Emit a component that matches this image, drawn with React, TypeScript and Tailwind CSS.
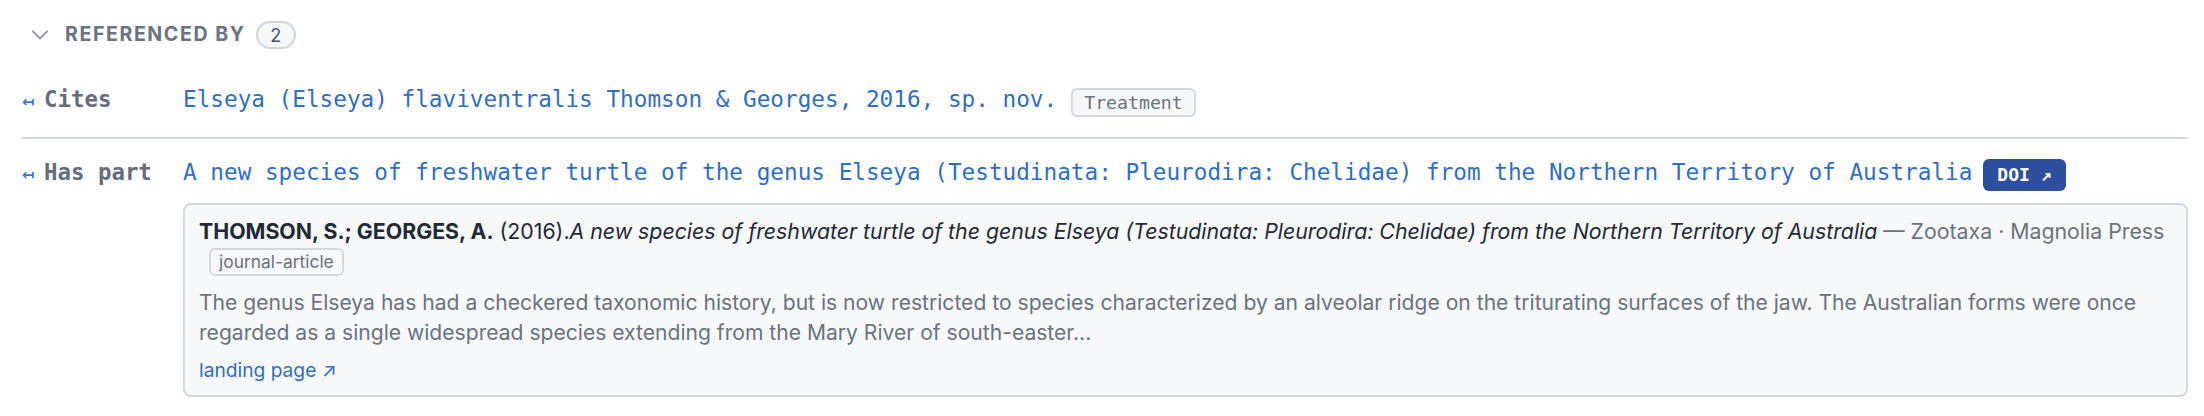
import { ChevronDown } from "lucide-react";

const mono = "font-['DejaVu_Sans_Mono',monospace]";

function RelLabel({ label }: { label: string }) {
  return (
    <div className="w-[161px] shrink-0 flex items-baseline">
      <span className="text-[#3b78c9] text-[15px] font-['DejaVu_Sans',sans-serif] font-bold w-[22px]">↤</span>
      <span className={`${mono} font-bold text-[22.4px] text-[#656c7b]`}>{label}</span>
    </div>
  );
}

export default function App() {
  return (
    <div className="min-h-[416px] bg-white pt-[21px] pl-[22px] pr-[16px] font-['Inter',sans-serif]">
      {/* header */}
      <div className="flex items-center h-[28px] pl-[4px]">
        <ChevronDown size={28} strokeWidth={2} className="text-[#9ca3af]" />
        <span className="ml-[11px] text-[19.6px] font-bold tracking-[0.08em] text-[#6b7280]">REFERENCED BY</span>
        <span className="ml-[10px] h-[28px] w-[40px] flex items-center justify-center rounded-full border-2 border-[#d1d5db] bg-[#f6f7f9] text-[18px] text-[#4b5563]">
          2
        </span>
      </div>

      {/* cites */}
      <div className="flex items-baseline pt-[33px] pb-[20px] border-b-2 border-[#d5d8de]">
        <RelLabel label="Cites" />
        <div className={`${mono} text-[22.7px] leading-[34px]`}>
          <span className="text-[#2f6fc2]">Elseya (Elseya) flaviventralis Thomson &amp; Georges, 2016, sp. nov.</span>
          <span className="ml-[14px] inline-block align-[-2px] rounded-[6px] border-2 border-[#d4d7dd] bg-[#f6f7f9] px-[11px] text-[18.2px] leading-[25px] text-[#6b7280]">
            Treatment
          </span>
        </div>
      </div>

      {/* has part */}
      <div className="flex items-baseline pt-[16px]">
        <RelLabel label="Has part" />
        <div className="flex-1 min-w-0">
          <div className={`${mono} text-[22.7px] leading-[34px]`}>
            <span className="text-[#2f6fc2]">
              A new species of freshwater turtle of the genus Elseya (Testudinata: Pleurodira: Chelidae) from the Northern Territory of Australia
            </span>
            <span className="ml-[11px] inline-block align-[-1px] rounded-[6px] bg-[#2e4f9d] px-[14px] pt-[5px] pb-[5px] text-[18px] leading-[22px] font-bold text-white">
              DOI ↗
            </span>
          </div>

          <div className="mt-[12px] rounded-[8px] border-2 border-[#d4d7dd] bg-[#f7f8fa] pt-[12px] pb-[9px] px-[14px]">
            <div className="text-[21.3px] leading-[29.4px] text-[#1f2937]">
              <span className="font-bold">THOMSON, S.; GEORGES, A.</span> (2016).
              <i>
                A new species of freshwater turtle of the genus Elseya (Testudinata: Pleurodira: Chelidae) from the Northern Territory of Australia
              </i>
              <span className="text-[#6b7280]"> — Zootaxa · Magnolia Press</span>
              <span className="ml-[10px] inline-block rounded-[6px] border-2 border-[#d4d7dd] px-[8px] text-[17.4px] leading-[24px] text-[#6b7280]">
                journal-article
              </span>
            </div>
            <p className="mt-[12px] text-[21.1px] leading-[29.4px] text-[#6b7280]">
              The genus Elseya has had a checkered taxonomic history, but is now restricted to species characterized by an alveolar ridge on the triturating surfaces of the jaw. The Australian forms were once regarded as a single widespread species extending from the Mary River of south-easter...
            </p>
            <a className="mt-[9px] block text-[19.2px] leading-[29.4px] text-[#2f6fc2]">landing page ↗</a>
          </div>
        </div>
      </div>
    </div>
  );
}
